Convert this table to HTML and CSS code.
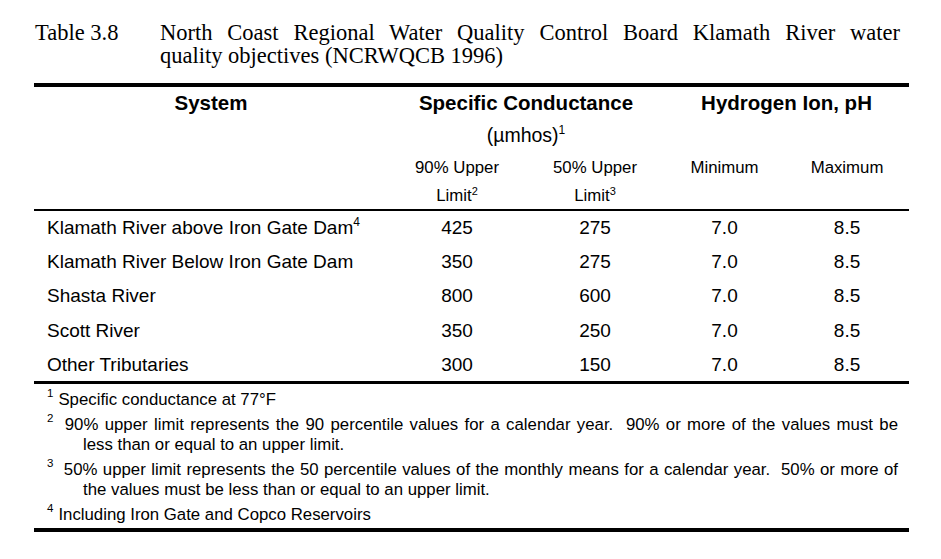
FILE: index.html
```html
<!DOCTYPE html>
<html lang="en">
<head>
<meta charset="utf-8">
<title>Table 3.8</title>
<link rel="stylesheet" href="styles.css">
</head>
<body>
<div class="page">
  <div class="caption">
    <div class="cap-label">Table 3.8</div>
    <div class="cap-text">
      <span class="cap-line">North Coast Regional Water Quality Control Board Klamath River water</span>
      <span class="cap-rest">quality objectives (NCRWQCB 1996)</span>
    </div>
  </div>

  <table class="wq">
    <colgroup>
      <col class="c1"><col class="c2"><col class="c3"><col class="c4"><col class="c5">
    </colgroup>
    <thead>
      <tr class="h1">
        <th class="sys">System</th>
        <th colspan="2">Specific Conductance</th>
        <th colspan="2">Hydrogen Ion, pH</th>
      </tr>
      <tr class="h2">
        <td></td>
        <td colspan="2" class="unit">(&micro;mhos)<sup class="hs">1</sup></td>
        <td colspan="2"></td>
      </tr>
      <tr class="h3">
        <td></td>
        <td class="sub">90% Upper</td>
        <td class="sub">50% Upper</td>
        <td class="sub">Minimum</td>
        <td class="sub">Maximum</td>
      </tr>
      <tr class="h4">
        <td></td>
        <td class="sub">Limit<sup class="ls">2</sup></td>
        <td class="sub">Limit<sup class="ls">3</sup></td>
        <td></td>
        <td></td>
      </tr>
    </thead>
    <tbody>
      <tr><td class="name">Klamath River above Iron Gate Dam<sup class="ds">4</sup></td><td>425</td><td>275</td><td>7.0</td><td>8.5</td></tr>
      <tr><td class="name">Klamath River Below Iron Gate Dam</td><td>350</td><td>275</td><td>7.0</td><td>8.5</td></tr>
      <tr><td class="name">Shasta River</td><td>800</td><td>600</td><td>7.0</td><td>8.5</td></tr>
      <tr><td class="name">Scott River</td><td>350</td><td>250</td><td>7.0</td><td>8.5</td></tr>
      <tr><td class="name">Other Tributaries</td><td>300</td><td>150</td><td>7.0</td><td>8.5</td></tr>
    </tbody>
  </table>

  <div class="notes">
    <p class="note"><sup class="fs">1</sup>Specific conductance at 77&deg;F</p>
    <p class="note">
      <span class="first"><sup class="fs">2</sup> 90% upper limit represents the 90 percentile values for a calendar year.&nbsp; 90% or more of the values must be</span>
      <span class="cont">less than or equal to an upper limit.</span>
    </p>
    <p class="note">
      <span class="first"><sup class="fs">3</sup> 50% upper limit represents the 50 percentile values of the monthly means for a calendar year.&nbsp; 50% or more of</span>
      <span class="cont">the values must be less than or equal to an upper limit.</span>
    </p>
    <p class="note"><sup class="fs">4</sup>Including Iron Gate and Copco Reservoirs</p>
  </div>
</div>
</body>
</html>
```
FILE: styles.css
```css
html, body {
  margin: 0;
  padding: 0;
  background: #ffffff;
  color: #000000;
}

.page {
  padding: 21px 0 0 34px;
  width: 875px;
}

.caption {
  display: flex;
  font-family: "Liberation Serif", "Times New Roman", serif;
  font-size: 22.5px;
  line-height: 23px;
}

.cap-label {
  width: 126px;
  flex: none;
  padding-left: 1px;
  box-sizing: border-box;
}

.cap-text {
  width: 740px;
}

.cap-line {
  display: block;
  text-align: justify;
  text-align-last: justify;
}

.cap-rest {
  display: block;
}

.wq {
  margin-top: 16px;
  width: 875px;
  border-collapse: collapse;
  table-layout: fixed;
  font-family: "Liberation Sans", Arial, sans-serif;
  font-size: 19px;
  border-top: 4px solid #000;
}

.c1 { width: 354px; }
.c2 { width: 138px; }
.c3 { width: 138px; }
.c4 { width: 121px; }
.c5 { width: 124px; }

.wq th, .wq td {
  padding: 0;
  text-align: center;
  vertical-align: middle;
}

.wq th {
  font-size: 20.5px;
  font-weight: bold;
}

.h1 { height: 34px; }
.h2 { height: 33px; }
.h3 { height: 31px; }
.h4 { height: 27px; }

.h4 td {
  border-bottom: 2px solid #000;
}

.sub {
  font-size: 16.8px;
}

.unit {
  font-size: 19.5px;
}

.hs, .ds {
  font-size: 12px;
  vertical-align: 8px;
  line-height: 0;
}

.ls {
  font-size: 11px;
  vertical-align: 6px;
  line-height: 0;
}

.wq tbody tr {
  height: 34.5px;
}

.wq tbody tr:last-child td {
  border-bottom: 3px solid #000;
}

.wq td.name {
  text-align: left;
  padding-left: 13px;
}

.notes {
  padding: 6px 11px 3px 13px;
  border-bottom: 4px solid #000;
  font-family: "Liberation Sans", Arial, sans-serif;
  font-size: 16.8px;
  line-height: 20px;
  display: flex;
  flex-direction: column;
  gap: 5px;
}

.note {
  margin: 0;
  white-space: nowrap;
}

.first {
  display: block;
  white-space: normal;
  text-align: justify;
  text-align-last: justify;
}

.cont {
  display: block;
  padding-left: 36px;
}

.fs {
  font-size: 11.5px;
  vertical-align: 8px;
  line-height: 0;
  margin-right: 5px;
}
```
